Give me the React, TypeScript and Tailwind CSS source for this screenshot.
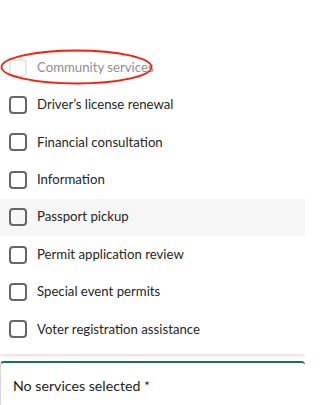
const services = [
  "Community services",
  "Driver’s license renewal",
  "Financial consultation",
  "Information",
  "Passport pickup",
  "Permit application review",
  "Special event permits",
  "Voter registration assistance",
];

export default function App() {
  return (
    <div className="relative h-[405px] w-[305px] overflow-hidden bg-white font-['Lato',sans-serif]">
      {/* Options menu */}
      <div className="pt-[49px]">
        <ul className="bg-white pb-[6px] shadow-[0_2px_3px_rgba(0,0,0,0.12)]">
          {services.map((label, i) => {
            const disabled = i === 0;
            const active = i === 4;
            return (
              <li
                key={label}
                className={`flex h-[37.4px] items-center gap-[10px] pl-[9px] ${active ? "bg-[#f6f6f6]" : ""}`}
              >
                <span
                  className={`h-[18px] w-[18px] shrink-0 rounded-[4px] border-2 ${disabled ? "border-[#e6e6e6]" : "border-[#666]"}`}
                />
                <span
                  className={`whitespace-nowrap text-[13.2px] ${disabled ? "text-[#8f8f8f]" : "text-[#262626]"}`}
                >
                  {label}
                </span>
              </li>
            );
          })}
        </ul>
      </div>

      {/* Field */}
      <div className="mt-[7px] h-[60px] rounded-t-[4px] border-l border-t-2 border-l-[#d6d6d6] border-t-[#1f6a66] px-[12px] pt-[10px]">
        <span className="whitespace-nowrap text-[14.2px] text-[#222]">No services selected *</span>
      </div>

      {/* Annotation */}
      <svg className="pointer-events-none absolute left-0 top-0" width="305" height="405">
        <ellipse cx="76.5" cy="67" rx="75" ry="16.5" fill="none" stroke="#ff1a0a" strokeWidth="1.8" />
      </svg>
    </div>
  );
}
